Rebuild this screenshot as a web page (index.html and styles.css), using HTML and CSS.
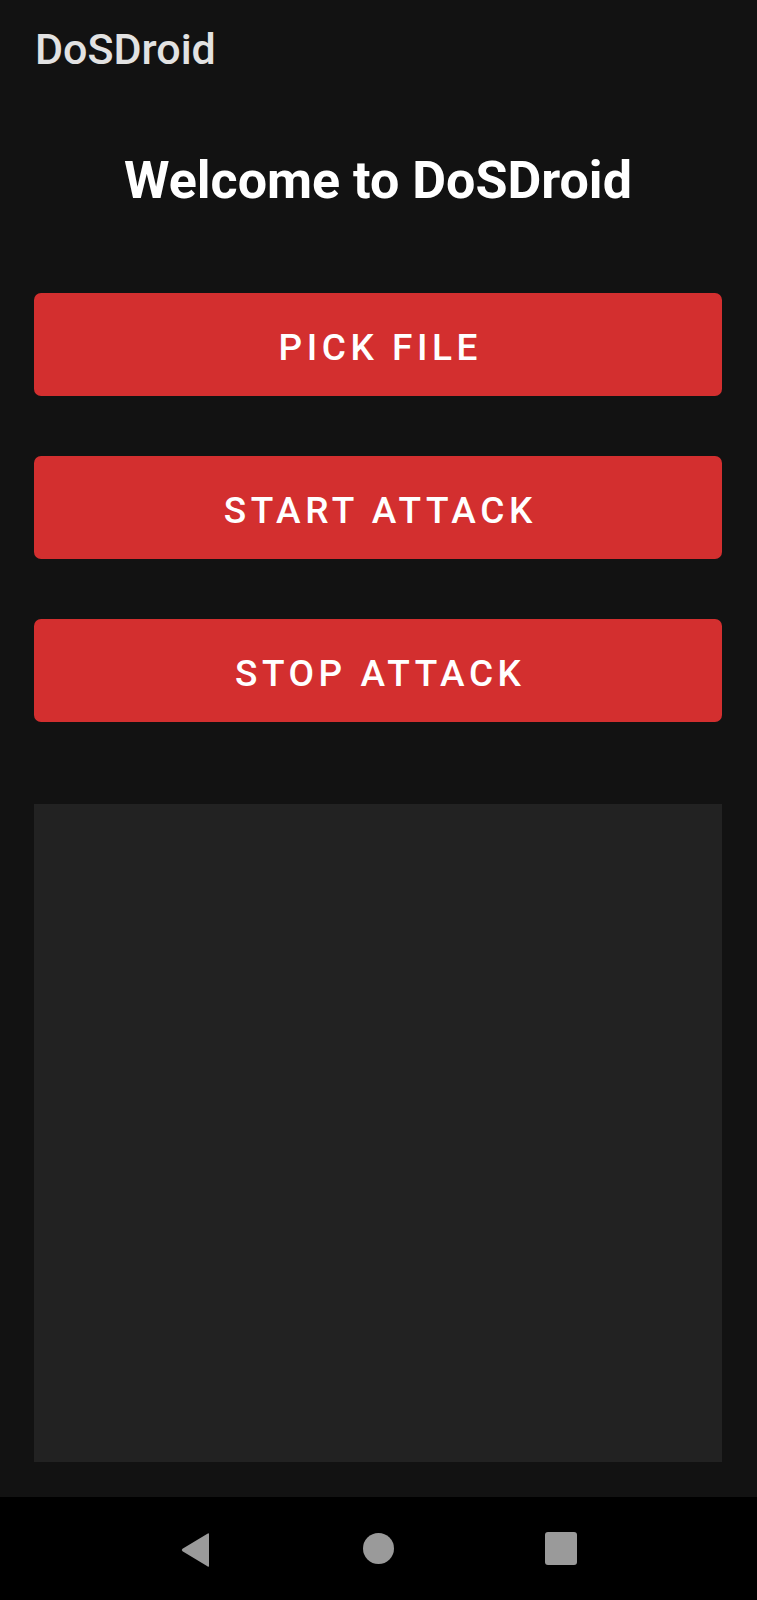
FILE: index.html
```html
<!DOCTYPE html>
<html>
<head>
<meta charset="utf-8">
<link rel="stylesheet" href="styles.css">
</head>
<body>
<div class="screen">
  <header class="appbar"><span class="appbar-title">DoSDroid</span></header>
  <main class="content">
    <h1 class="welcome">Welcome to DoSDroid</h1>
    <div class="actions">
      <button class="btn">PICK FILE</button>
      <button class="btn">START ATTACK</button>
      <button class="btn">STOP ATTACK</button>
    </div>
    <div class="log"></div>
  </main>
  <nav class="navbar">
    <svg class="nav-back" width="32" height="36" viewBox="0 0 32 36"><path d="M29 2.5 L29 33.5 Q29 35.5 27.4 34.2 L2.5 19.2 Q1 18 2.5 16.8 L27.4 1.8 Q29 0.5 29 2.5 Z" fill="#9a9a9a"/></svg>
    <span class="nav-home"></span>
    <span class="nav-recent"></span>
  </nav>
</div>
</body>
</html>
```
FILE: styles.css
```css
html, body {
  margin: 0;
  padding: 0;
  background: #121212;
}
.screen {
  width: 757px;
  height: 1600px;
  display: flex;
  flex-direction: column;
  font-family: Roboto, "Liberation Sans", sans-serif;
}
.appbar {
  padding: 28px 0 0 35px;
  height: 42px;
}
.appbar-title {
  display: block;
  font-size: 43px;
  line-height: 42px;
  font-weight: 500;
  color: #e2e2e2;
}
.content {
  flex: 1;
  display: flex;
  flex-direction: column;
  padding: 0 35px 0 34px;
}
.welcome {
  margin: 85px 0 0;
  font-size: 52px;
  line-height: 52px;
  font-weight: 700;
  color: #ffffff;
  text-align: center;
}
.actions {
  margin-top: 86px;
  display: flex;
  flex-direction: column;
  gap: 60px;
}
.btn {
  height: 103px;
  border: none;
  border-radius: 7px;
  background: #d32f2f;
  color: #ffffff;
  font-family: Roboto, "Liberation Sans", sans-serif;
  font-size: 37px;
  font-weight: 500;
  letter-spacing: 0.123em;
  padding: 6px 0 0 0.123em;
  display: flex;
  align-items: center;
  justify-content: center;
}
.log {
  margin-top: 82px;
  height: 658px;
  background: #222222;
}
.navbar {
  height: 103px;
  background: #000000;
  display: flex;
  align-items: center;
}
.nav-back {
  margin-left: 180px;
  margin-top: 2px;
}
.nav-home {
  width: 31px;
  height: 31px;
  border-radius: 50%;
  background: #9a9a9a;
  margin-left: 151px;
}
.nav-recent {
  width: 32px;
  height: 33px;
  border-radius: 3px;
  background: #9a9a9a;
  margin-left: 151px;
}
```
